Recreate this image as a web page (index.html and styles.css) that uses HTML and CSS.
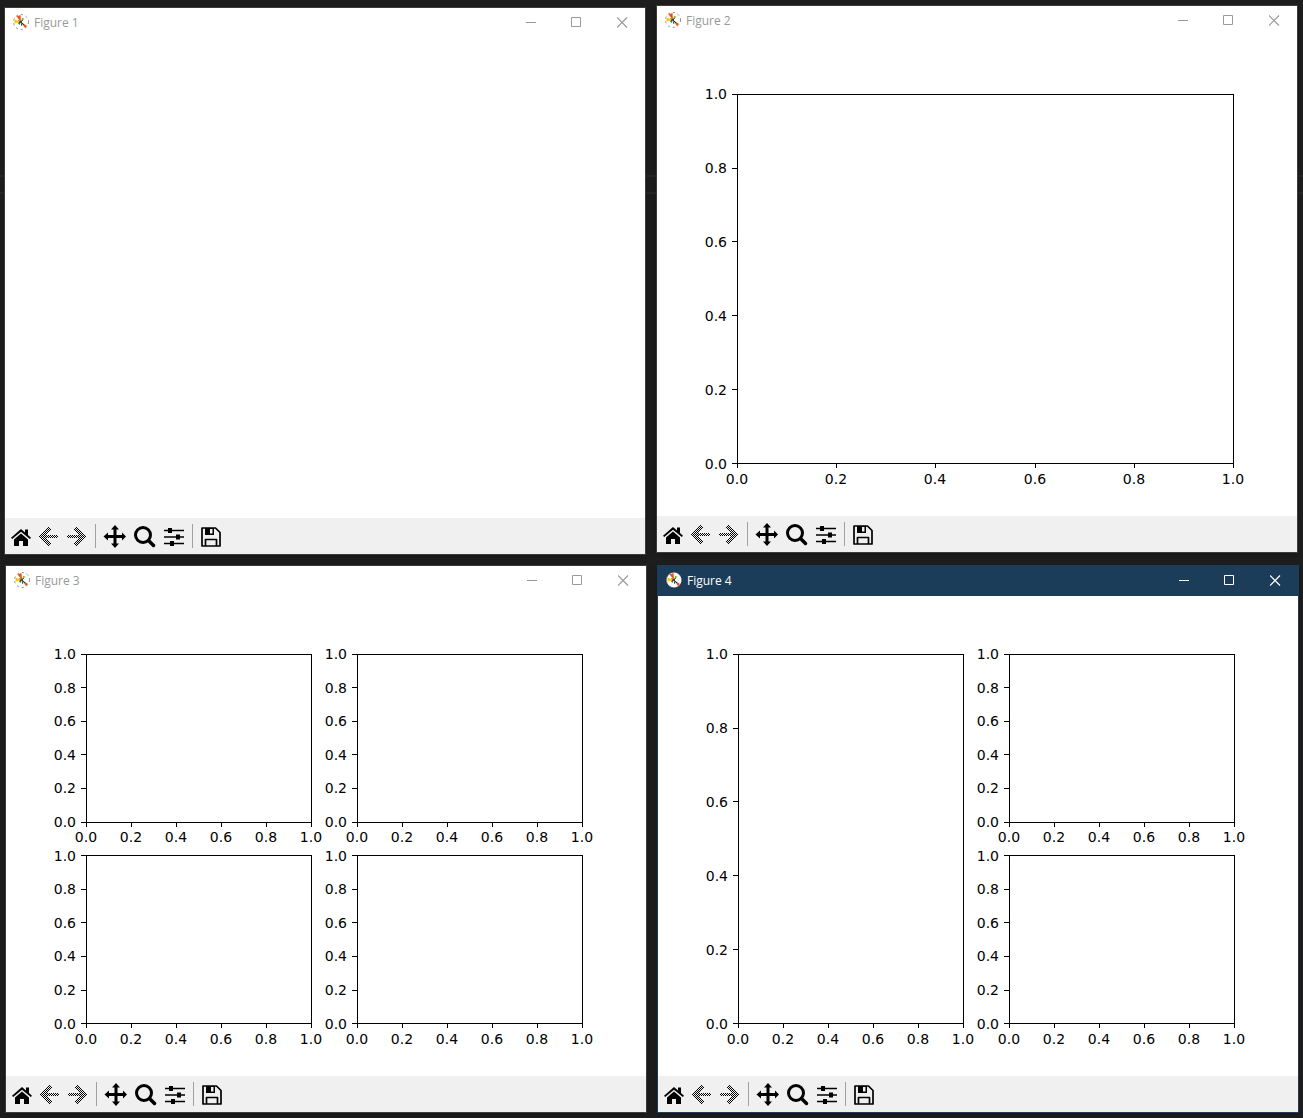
FILE: index.html
```html
<!DOCTYPE html>
<html lang="en">
<head>
<meta charset="utf-8">
<title>Figures</title>
<link rel="stylesheet" href="styles.css">
</head>
<body>
<svg class="sprite" aria-hidden="true">
  <defs>
    <pattern id="stipple" width="2" height="2" patternUnits="userSpaceOnUse">
      <rect width="1" height="1" fill="#000"/><rect x="1" y="1" width="1" height="1" fill="#000"/>
    </pattern>
  </defs>
  <symbol id="logo" viewBox="0 0 16 16">
    <circle class="logo-disc" cx="8" cy="8" r="7.5"/>
    <path d="M8 8 3.500 2.500 7.500 1z" fill="#f05010"/>
    <path d="M8 8 1.500 5.500 1.500 9.500z" fill="#ffc400"/>
    <path d="M8 8 9 4 11.500 4.500z" fill="#7db52a"/>
    <path d="M8 8 14 12 12 14z" fill="#e8500c"/>
    <path d="M8 8 5 9.500 6.500 11z" fill="#2a8a50"/>
    <path d="M8 8 8 12 9.500 11z" fill="#205030"/>
    <path d="M5.500 6.500 8 8 11 11M8 8 9.500 6M5.500 9 8 8" fill="none" stroke="#333" stroke-width="1"/>
  </symbol>
  <symbol id="minimize" viewBox="0 0 11 11"><path d="M1 5.500H11" stroke="currentColor"/></symbol>
  <symbol id="maximize" viewBox="0 0 11 11"><path d="M.5.5h9v9h-9z" fill="none" stroke="currentColor"/></symbol>
  <symbol id="close" viewBox="0 0 11 11"><path d="m0 .5 10 10M10 .5 0 10.500" stroke="currentColor" stroke-width="1.200"/></symbol>
  <symbol id="home" viewBox="0 0 24 24">
    <path d="M12 9.500 5 15.500V22h5v-5h4v5h5v-6.500z"/>
    <path d="M12 5 2 13.700l1.200 1.400L12 7.700l8.800 7.400 1.200-1.400-3-2.600V5.500h-3v3z"/>
  </symbol>
  <symbol id="back" viewBox="0 0 24 24"><path fill="url(#stipple)" shape-rendering="crispEdges" d="m11 3 3 2-5 6h12v3H9l5 6-3 2-9-9.500z"/></symbol>
  <symbol id="forward" viewBox="0 0 24 24"><path fill="url(#stipple)" shape-rendering="crispEdges" d="m12 3-3 2 5 6H2v3h12l-5 6 3 2 9-9.500z"/></symbol>
  <symbol id="pan" viewBox="0 0 24 24"><path d="m13 1 4 4.500h-2.500V11H20V8.500l4 4-4 4V14h-5.500v5.500H17L13 24l-4-4.500h2.500V14H6v2.500l-4.500-4L6 8.500V11h5.500V5.500H9z"/></symbol>
  <symbol id="zoom" viewBox="0 0 24 24"><circle cx="11" cy="11" r="7.500" fill="none" stroke="#000" stroke-width="3"/><path d="m16.500 16.500 5 5" stroke="#000" stroke-width="3.500" stroke-linecap="round"/></symbol>
  <symbol id="sliders" viewBox="0 0 24 24">
    <path d="M2 6.500h20M2 13h20M2 19.500h20" stroke="#000" stroke-width="1.500"/>
    <path d="M6 4h4v5H6zM14 10.500h4v5h-4zM8 17h4v5H8z"/>
  </symbol>
  <symbol id="save" viewBox="0 0 24 24">
    <path d="M3 4h13.500L21 8.500V22H3zM6.500 22v-6.500h11V22" fill="none" stroke="#000" stroke-width="1.700" stroke-linejoin="round"/>
    <path d="M6 4h9v7H6zM11 5v4.500h2.500V5z" fill-rule="evenodd"/>
  </symbol>
</svg>

<main class="desktop">
  <div class="column column-left">
    <section class="window" aria-label="Figure 1">
      <header class="titlebar">
        <svg class="logo"><use href="#logo"/></svg>
        <h2 class="title">Figure 1</h2>
        <button class="control" aria-label="Minimize"><svg><use href="#minimize"/></svg></button>
        <button class="control" aria-label="Maximize"><svg><use href="#maximize"/></svg></button>
        <button class="control" aria-label="Close"><svg><use href="#close"/></svg></button>
      </header>
      <svg class="canvas" viewBox="0 0 640 480"></svg>
      <div class="toolbar">
        <button class="tool" aria-label="Home"><svg><use href="#home"/></svg></button>
        <button class="tool" aria-label="Back" disabled><svg><use href="#back"/></svg></button>
        <button class="tool" aria-label="Forward" disabled><svg><use href="#forward"/></svg></button>
        <span class="separator"></span>
        <button class="tool wide" aria-label="Pan"><svg><use href="#pan"/></svg></button>
        <button class="tool wide" aria-label="Zoom"><svg><use href="#zoom"/></svg></button>
        <button class="tool" aria-label="Configure subplots"><svg><use href="#sliders"/></svg></button>
        <span class="separator"></span>
        <button class="tool" aria-label="Save"><svg><use href="#save"/></svg></button>
      </div>
    </section>

    <section class="window cascaded" aria-label="Figure 3">
      <header class="titlebar">
        <svg class="logo"><use href="#logo"/></svg>
        <h2 class="title">Figure 3</h2>
        <button class="control" aria-label="Minimize"><svg><use href="#minimize"/></svg></button>
        <button class="control" aria-label="Maximize"><svg><use href="#maximize"/></svg></button>
        <button class="control" aria-label="Close"><svg><use href="#close"/></svg></button>
      </header>
      <svg class="canvas" viewBox="0 0 640 480" data-axes="80,57.6,225,168 351,57.6,225,168 80,259.2,225,168 351,259.2,225,168"></svg>
      <div class="toolbar">
        <button class="tool" aria-label="Home"><svg><use href="#home"/></svg></button>
        <button class="tool" aria-label="Back" disabled><svg><use href="#back"/></svg></button>
        <button class="tool" aria-label="Forward" disabled><svg><use href="#forward"/></svg></button>
        <span class="separator"></span>
        <button class="tool wide" aria-label="Pan"><svg><use href="#pan"/></svg></button>
        <button class="tool wide" aria-label="Zoom"><svg><use href="#zoom"/></svg></button>
        <button class="tool" aria-label="Configure subplots"><svg><use href="#sliders"/></svg></button>
        <span class="separator"></span>
        <button class="tool" aria-label="Save"><svg><use href="#save"/></svg></button>
      </div>
    </section>
  </div>

  <div class="column column-right">
    <section class="window" aria-label="Figure 2">
      <header class="titlebar">
        <svg class="logo"><use href="#logo"/></svg>
        <h2 class="title">Figure 2</h2>
        <button class="control" aria-label="Minimize"><svg><use href="#minimize"/></svg></button>
        <button class="control" aria-label="Maximize"><svg><use href="#maximize"/></svg></button>
        <button class="control" aria-label="Close"><svg><use href="#close"/></svg></button>
      </header>
      <svg class="canvas" viewBox="0 0 640 480" data-axes="80,57.6,496,369.6"></svg>
      <div class="toolbar">
        <button class="tool" aria-label="Home"><svg><use href="#home"/></svg></button>
        <button class="tool" aria-label="Back" disabled><svg><use href="#back"/></svg></button>
        <button class="tool" aria-label="Forward" disabled><svg><use href="#forward"/></svg></button>
        <span class="separator"></span>
        <button class="tool wide" aria-label="Pan"><svg><use href="#pan"/></svg></button>
        <button class="tool wide" aria-label="Zoom"><svg><use href="#zoom"/></svg></button>
        <button class="tool" aria-label="Configure subplots"><svg><use href="#sliders"/></svg></button>
        <span class="separator"></span>
        <button class="tool" aria-label="Save"><svg><use href="#save"/></svg></button>
      </div>
    </section>

    <section class="window cascaded active" aria-label="Figure 4">
      <header class="titlebar">
        <svg class="logo"><use href="#logo"/></svg>
        <h2 class="title">Figure 4</h2>
        <button class="control" aria-label="Minimize"><svg><use href="#minimize"/></svg></button>
        <button class="control" aria-label="Maximize"><svg><use href="#maximize"/></svg></button>
        <button class="control" aria-label="Close"><svg><use href="#close"/></svg></button>
      </header>
      <svg class="canvas" viewBox="0 0 640 480" data-axes="80,57.6,225,369.6 351,57.6,225,168 351,259.2,225,168"></svg>
      <div class="toolbar">
        <button class="tool" aria-label="Home"><svg><use href="#home"/></svg></button>
        <button class="tool" aria-label="Back" disabled><svg><use href="#back"/></svg></button>
        <button class="tool" aria-label="Forward" disabled><svg><use href="#forward"/></svg></button>
        <span class="separator"></span>
        <button class="tool wide" aria-label="Pan"><svg><use href="#pan"/></svg></button>
        <button class="tool wide" aria-label="Zoom"><svg><use href="#zoom"/></svg></button>
        <button class="tool" aria-label="Configure subplots"><svg><use href="#sliders"/></svg></button>
        <span class="separator"></span>
        <button class="tool" aria-label="Save"><svg><use href="#save"/></svg></button>
      </div>
    </section>
  </div>
</main>
<script src="axes.js"></script>
</body>
</html>
```
FILE: styles.css
```css
* { box-sizing: border-box; }

body {
  margin: 0;
  min-height: 100vh;
  background:
    linear-gradient(#282828, #282828) 0 175px / 100% 2px no-repeat,
    linear-gradient(#282828, #282828) 0 192px / 100% 2px no-repeat,
    #1e1e1e;
  font-family: "Open Sans", "Noto Sans", sans-serif;
}

.sprite { position: absolute; width: 0; height: 0; }

.desktop {
  display: grid;
  grid-template-columns: 1fr 1fr;
  column-gap: 10px;
  padding: 0 5px 5px 4px;
}

.column { display: flex; flex-direction: column; min-width: 0; }
.column-left { padding-top: 7px; gap: 10px; }
.column-right { padding-top: 5px; gap: 12px; }

.window {
  background: #fff;
  border: 1px solid #3c3c3c;
  box-shadow: 0 2px 6px rgba(0, 0, 0, 0.25);
}
.cascaded { margin: 0 -1px 0 1px; }
.active { border-color: #1c3d5a; }

.titlebar {
  display: flex;
  align-items: center;
  height: 30px;
  padding: 0 0 2px 8px;
  color: #999;
}
.active .titlebar { background: #1c3d5a; color: #fff; }

.logo { width: 16px; height: 16px; }
.logo-disc { fill: #fff; stroke: #888; stroke-dasharray: 2 3; }

.title {
  flex: 1;
  margin: 0 0 0 5px;
  font-size: 12px;
  font-weight: 400;
  line-height: 18px;
  padding-top: 2px;
}

.control, .tool {
  display: flex;
  align-items: center;
  justify-content: center;
  padding: 0;
  border: 0;
  background: none;
  color: inherit;
}
.control { width: 46px; height: 28px; }
.control svg { width: 11px; height: 11px; }

.canvas { display: block; width: 100%; height: auto; }
.axes-lines { fill: none; stroke: #000; shape-rendering: crispEdges; }
.tick-label { font: 14px "DejaVu Sans", sans-serif; fill: #000; }
.tick-x { text-anchor: middle; }
.tick-y { text-anchor: end; }

.toolbar {
  display: flex;
  align-items: center;
  height: 36px;
  padding-left: 4px;
  background: #f0f0f0;
}
.tool { width: 24px; height: 24px; margin-right: 4px; color: #000; }
.wide { margin-right: 6px; }
.tool svg { width: 24px; height: 24px; }
.separator { width: 1px; height: 24px; margin: 0 6px 0 2px; background: #a0a0a0; }
```
FILE: axes.js
```js
// Draws each "left,top,width,height" entry as a frame with ticks from 0 to 1.
const NS = "http://www.w3.org/2000/svg";

function add(parent, name, attributes, text) {
  const node = document.createElementNS(NS, name);
  for (const key in attributes) node.setAttribute(key, attributes[key]);
  if (text) node.textContent = text;
  parent.appendChild(node);
}

for (const canvas of document.querySelectorAll("[data-axes]")) {
  for (const entry of canvas.dataset.axes.split(" ")) {
    const [left, top, width, height] = entry.split(",").map(Number);
    const bottom = top + height;
    const first = Math.round(top);
    const last = Math.round(bottom);
    let path = `M${left + 0.5} ${first + 0.5}h${width}v${last - first}h${-width}z`;
    for (let i = 0; i <= 5; i++) {
      const x = left + Math.round(width * i / 5);
      const y = bottom - height * i / 5;
      const label = (i / 5).toFixed(1);
      path += `M${x + 0.5} ${last + 1}v4M${left} ${Math.round(y) + 0.5}h-5`;
      add(canvas, "text", { class: "tick-label tick-x", x: x, y: Math.round(bottom + 20.4) }, label);
      add(canvas, "text", { class: "tick-label tick-y", x: left - 10, y: Math.round(y + 5.4) }, label);
    }
    add(canvas, "path", { class: "axes-lines", d: path });
  }
}
```
